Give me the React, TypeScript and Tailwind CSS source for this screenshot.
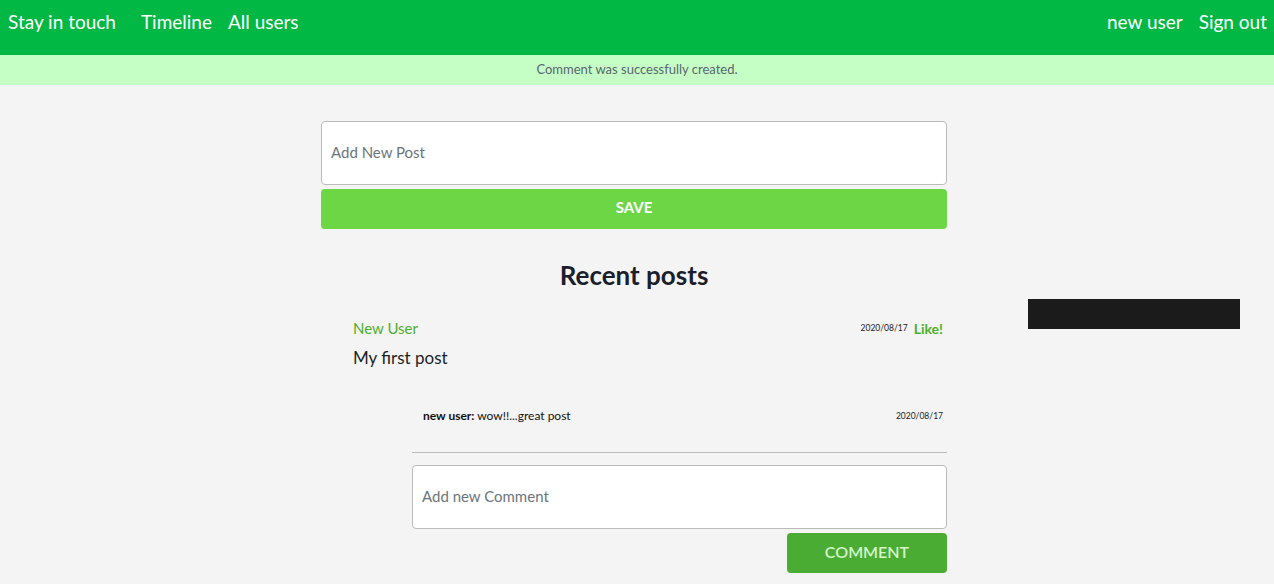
import React from 'react';

const font = { fontFamily: "Lato, 'Noto Sans', sans-serif" };

function Navbar() {
  return (
    <nav className="h-[55px] bg-[#00b843] flex items-start justify-between pl-2 pr-[7px] pt-[9px] text-white text-[19px] leading-[26px]">
      <div className="flex items-center">
        <span>Stay in touch</span>
        <span className="ml-[25px]">Timeline</span>
        <span className="ml-4">All users</span>
      </div>
      <div className="flex items-center gap-4">
        <span>new user</span>
        <span>Sign out</span>
      </div>
    </nav>
  );
}

function Post() {
  return (
    <div className="pl-8 pr-1 mt-[29px]">
      <div className="flex items-center justify-between">
        <span className="text-[15px] text-[#4caf2f]">New User</span>
        <div className="flex items-center gap-[6px]">
          <span className="text-[8.5px] text-[#222]">2020/08/17</span>
          <span className="text-[14px] font-bold text-[#4caf2f]">Like!</span>
        </div>
      </div>
      <p className="mt-[5px] text-[17px] text-[#1c1f26]">My first post</p>
    </div>
  );
}

export default function App() {
  return (
    <div className="min-h-[584px] bg-[#f4f4f4]" style={font}>
      <Navbar />
      <div className="h-[30px] bg-[#c6ffc6] flex items-center justify-center text-[13px] text-[#5b6470]">
        Comment was successfully created.
      </div>
      <div className="flex">
        <div className="w-[321px] shrink-0" />
        <main className="w-[626px] shrink-0 pt-[36px]">
          <div className="h-[64px] bg-white border border-[#bbb] rounded flex items-center px-[9px] pb-[2px] text-[15px] text-[#6c757d]">
            Add New Post
          </div>
          <button className="w-full h-[40px] mt-1 pb-[3px] bg-[#6dd645] rounded text-white font-bold text-[15px]">SAVE</button>
          <h2 className="mt-[33px] text-center text-[26px] font-bold leading-none text-[#1a1f2b]">Recent posts</h2>
          <Post />
          <div className="ml-[91px]">
            <div className="flex items-center justify-between pl-[11px] pr-[4px] mt-[37px]">
              <span className="text-[12px] text-[#111]">
                <b>new user:</b> wow!!...great post
              </span>
              <span className="text-[8.5px] text-[#222]">2020/08/17</span>
            </div>
            <div className="border-t border-[#bbb] mt-[27px]" />
            <div className="h-[64px] mt-3 bg-white border border-[#bbb] rounded flex items-center px-[9px] pb-[2px] text-[15px] text-[#6c757d]">
              Add new Comment
            </div>
            <div className="flex justify-end mt-1">
              <button className="w-[160px] h-[40px] pb-[3px] bg-[#4aac33] rounded text-[#d4f7cc] text-[16px] font-semibold">COMMENT</button>
            </div>
          </div>
        </main>
        <aside className="flex-1 pl-[81px] pt-[214px]">
          <div className="w-[212px] h-[30px] bg-[#1b1b1b]" />
        </aside>
      </div>
    </div>
  );
}
